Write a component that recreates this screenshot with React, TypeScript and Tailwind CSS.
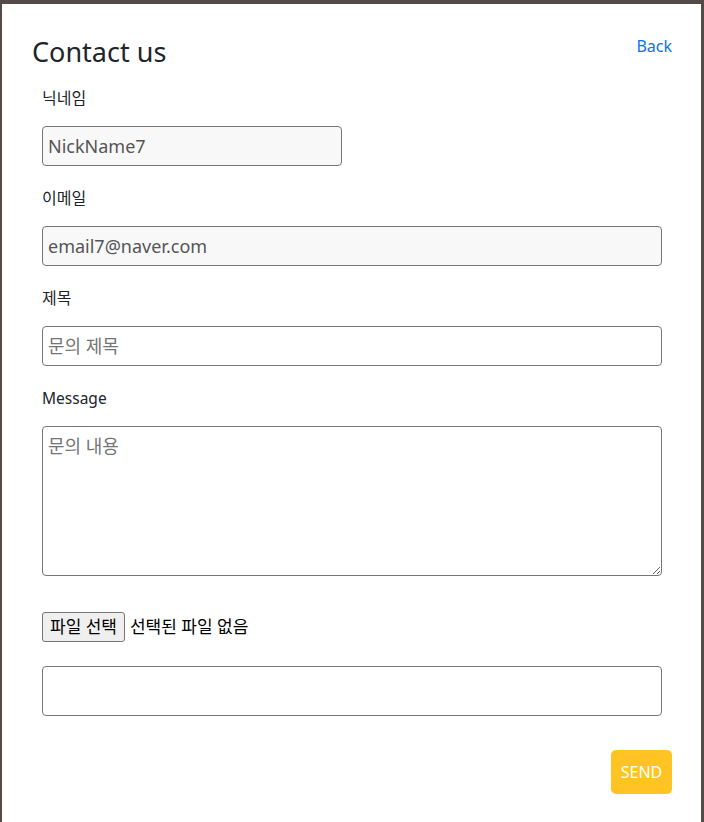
import React from 'react';

const font = { fontFamily: '"Noto Sans", "Noto Sans CJK KR", sans-serif' };

export default function App() {
  return (
    <div className="min-h-[822px] bg-[#544a47] pt-[4px] pl-[2px] pr-[3px]" style={font}>
      <div className="bg-white min-h-[818px] text-[#212529]">
        {/* header */}
        <div className="flex justify-between items-start pl-[30px] pr-[29px] pt-[31px]">
          <h1 className="text-[27px] leading-[33px] font-normal">Contact us</h1>
          <a href="#" className="text-[16px] leading-[24px] text-[#0d6efd] -mt-[1px]">Back</a>
        </div>

        <form className="pl-[40px] pr-[39px] pt-[18px]">
          <div className="mb-[20px]">
            <label className="block text-[16px] leading-[24px] mb-[16px]">닉네임</label>
            <input
              readOnly
              value="NickName7"
              className="w-[300px] h-[40px] px-[5px] text-[18px] text-[#555] bg-[#f8f8f8] border border-[#767676] rounded-[4px] outline-none"
            />
          </div>
          <div className="mb-[20px]">
            <label className="block text-[16px] leading-[24px] mb-[16px]">이메일</label>
            <input
              readOnly
              value="email7@naver.com"
              className="w-full h-[40px] px-[5px] text-[18px] text-[#555] bg-[#f8f8f8] border border-[#767676] rounded-[4px] outline-none"
            />
          </div>
          <div className="mb-[20px]">
            <label className="block text-[16px] leading-[24px] mb-[16px]">제목</label>
            <input
              placeholder="문의 제목"
              className="w-full h-[40px] px-[5px] text-[18px] bg-white border border-[#767676] rounded-[4px] outline-none placeholder:text-[#757575]"
            />
          </div>
          <div className="mb-[36px]">
            <label className="block text-[15.5px] leading-[24px] mb-[16px]">Message</label>
            <textarea
              placeholder="문의 내용"
              className="block w-full h-[150px] px-[5px] py-[6px] text-[18px] bg-white border border-[#767676] rounded-[4px] outline-none placeholder:text-[#757575]"
            />
          </div>
          <div className="flex items-center mb-[24px]">
            <button
              type="button"
              className="h-[30px] px-[7px] text-[17px] leading-[20px] text-black bg-[#efefef] border border-[#767676] rounded-[3px]"
            >
              파일 선택
            </button>
            <span className="ml-[5px] text-[17px] text-black">선택된 파일 없음</span>
          </div>
          <input className="block w-full h-[50px] border border-[#767676] rounded-[4px] outline-none" />
        </form>

        <div className="flex justify-end pr-[29px] pt-[34px] pb-[29px]">
          <button
            type="button"
            className="h-[44px] w-[61px] text-[16px] text-white bg-[#ffc423] rounded-[5px]"
          >
            SEND
          </button>
        </div>
      </div>
    </div>
  );
}
